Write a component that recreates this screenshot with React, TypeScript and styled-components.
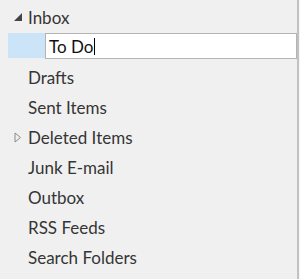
import React from "react";
import styled, { createGlobalStyle } from "styled-components";

const Global = createGlobalStyle`
  html, body { margin: 0; padding: 0; background: #f0f0f0; }
  body { font-family: "Lato", "Open Sans", sans-serif; }
`;

const Pane = styled.div`
  width: 300px;
  height: 279px;
  box-sizing: border-box;
  background: #f0f0f0;
  padding-right: 3px;
  box-shadow: inset -1px 0 0 #f6f6f6, inset -3px 0 0 #c2c2c2;
  display: flex;
  flex-direction: column;
  padding-top: 2px;
`;

const Row = styled.div`
  height: 30px;
  display: flex;
  align-items: center;
  position: relative;
  padding-left: 28px;
  font-size: 17px;
  color: #353535;
  white-space: nowrap;
`;

const Toggle = styled.span`
  position: absolute;
  left: 12px;
  top: 50%;
  transform: translateY(-50%);
  width: 12px;
  height: 12px;
  display: flex;
  align-items: center;
  justify-content: center;
`;

const EditRow = styled.div`
  height: 30px;
  display: flex;
  align-items: flex-start;
`;

const Highlight = styled.div`
  margin-top: 1px;
  margin-left: 8px;
  height: 25px;
  flex: 1;
  display: flex;
  background: #cce4f7;
`;

const Input = styled.div`
  margin-left: 37px;
  flex: 1;
  box-sizing: border-box;
  height: 26px;
  background: #ffffff;
  border: 1px solid #b4b4b4;
  display: flex;
  align-items: center;
  padding-left: 3px;
  font-size: 17px;
  color: #111;
`;

const Caret = styled.span`
  display: inline-block;
  width: 1px;
  height: 17px;
  background: #000;
  margin-left: 1px;
`;

const Expanded = () => (
  <svg width="9" height="9" viewBox="0 0 9 9">
    <polygon points="8,0 8,8 0,8" fill="#444" />
  </svg>
);

const Collapsed = () => (
  <svg width="8" height="11" viewBox="0 0 8 11">
    <polygon points="1,1 6.5,5.5 1,10" fill="none" stroke="#8a8a8a" strokeWidth="1" />
  </svg>
);

const folders: { name: string; toggle?: "open" | "closed" }[] = [
  { name: "Drafts" },
  { name: "Sent Items" },
  { name: "Deleted Items", toggle: "closed" },
  { name: "Junk E-mail" },
  { name: "Outbox" },
  { name: "RSS Feeds" },
  { name: "Search Folders" },
];

export default function App() {
  return (
    <>
      <Global />
      <Pane>
        <Row>
          <Toggle>
            <Expanded />
          </Toggle>
          Inbox
        </Row>
        <EditRow>
          <Highlight>
            <Input>
              To Do
              <Caret />
            </Input>
          </Highlight>
        </EditRow>
        {folders.map((f) => (
          <Row key={f.name}>
            {f.toggle === "closed" && (
              <Toggle>
                <Collapsed />
              </Toggle>
            )}
            {f.name}
          </Row>
        ))}
      </Pane>
    </>
  );
}
